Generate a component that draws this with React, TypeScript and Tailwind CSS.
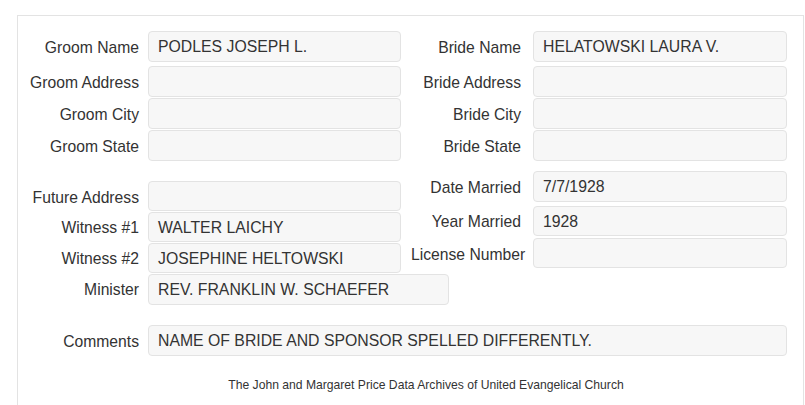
import React from 'react';

type FieldProps = {
	label: string;
	value?: string;
	labelW: string;
	inputW: string;
	gap: string;
	h?: string;
	className?: string;
	labelShift?: string;
};

// One label + read-only box row
const Field = ({ label, value, labelW, inputW, gap, h = 'h-[31px]', className = '', labelShift = 'pt-[3px]' }: FieldProps) => {
	return (
		<div className={`flex items-center ${gap} ${className}`}>
			<div className={`${labelW} shrink-0 text-right text-[15.7px] leading-none whitespace-nowrap ${labelShift}`}>
				{label}
			</div>
			<div
				className={`${inputW} ${h} shrink-0 flex items-center rounded-[4px] border border-[#e3e3e3] bg-[#f7f7f7] pl-[9px] pt-[1px] text-[15.8px] leading-none whitespace-nowrap`}
			>
				{value}
			</div>
		</div>
	);
};

const left = { labelW: 'w-[121px]', gap: 'gap-[9px]', inputW: 'w-[253px]' };
const right = { labelW: 'w-[110px] ml-[2px]', gap: 'gap-[12px]', inputW: 'w-[254px]' };

export default function App() {
	return (
		<div className="h-[405px] overflow-hidden bg-white pt-[15px] pl-[17px] text-[#333] font-['Liberation_Sans',Arial,sans-serif]">
			<div className="w-[787px] h-[390px] border border-b-0 border-[#e3e3e3] pt-[15px]">
				{/* Groom / Bride */}
				<div className="flex">
					<div className="w-[391px] flex flex-col">
						<Field label="Groom Name" value="PODLES JOSEPH L." {...left} className="mb-[4px]" />
						<Field label="Groom Address" {...left} className="mb-[1px]" />
						<Field label="Groom City" {...left} className="mb-[1px]" labelShift="pt-[2px]" />
						<Field label="Groom State" {...left} />
					</div>
					<div className="flex flex-col">
						<Field label="Bride Name" value="HELATOWSKI LAURA V." {...right} className="mb-[4px]" />
						<Field label="Bride Address" {...right} className="mb-[1px]" />
						<Field label="Bride City" {...right} className="mb-[1px]" labelShift="pt-[2px]" />
						<Field label="Bride State" {...right} />
					</div>
				</div>

				{/* Marriage details */}
				<div className="flex items-start">
					<div className="w-[391px] flex flex-col mt-[20px]">
						<Field label="Future Address" {...left} h="h-[30px]" className="mb-[1px]" labelShift="pt-[4px]" />
						<Field label="Witness #1" value="WALTER LAICHY" {...left} h="h-[30px]" className="mb-[1px]" labelShift="pt-[1px]" />
						<Field label="Witness #2" value="JOSEPHINE HELTOWSKI" {...left} h="h-[30px]" labelShift="pt-[1px]" />
					</div>
					<div className="flex flex-col mt-[10px]">
						<Field label="Date Married" value="7/7/1928" {...right} className="mb-[4px]" />
						<Field label="Year Married" value="1928" {...right} h="h-[30px]" className="mb-[2px]" labelShift="pt-[1px]" />
						<Field label="License Number" {...right} h="h-[30px]" />
					</div>
				</div>
				<Field
					label="Minister"
					value="REV. FRANKLIN W. SCHAEFER"
					labelW="w-[121px]"
					gap="gap-[9px]"
					inputW="w-[301px]"
					className="mt-[1px]"
					labelShift="pt-[1px]"
				/>

				{/* Comments */}
				<Field
					label="Comments"
					value="NAME OF BRIDE AND SPONSOR SPELLED DIFFERENTLY."
					labelW="w-[121px]"
					gap="gap-[9px]"
					inputW="w-[639px]"
					className="mt-[20px]"
				/>

				<p className="mt-[22px] pl-[31px] text-center text-[12.15px] leading-[15px]">
					The John and Margaret Price Data Archives of United Evangelical Church
				</p>
			</div>
		</div>
	);
}
